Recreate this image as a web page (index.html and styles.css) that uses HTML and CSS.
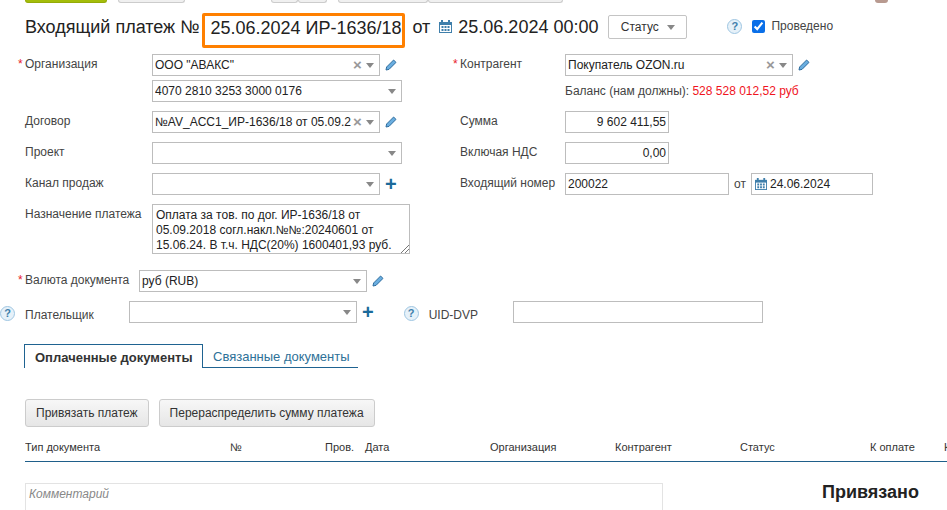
FILE: index.html
```html
<!DOCTYPE html>
<html lang="ru">
<head>
    <meta charset="UTF-8">
    <title>Входящий платеж</title>
    <link rel="stylesheet" href="styles.css">
</head>
<body>
    <svg class="sprite" width="0" height="0">
        <symbol id="i-pencil" viewBox="0 0 12 12">
            <path d="M8.600 1 11 3.400 4 10.400 1 11 1.600 8z" fill="#6aaee0" stroke="#2f6d9e" stroke-width="1"/>
        </symbol>
        <symbol id="i-cal" viewBox="0 0 13 13">
            <path d="M0 2h13v11H0z" fill="#3f7fab"/>
            <path d="M1 5h11v7H1z" fill="#fff"/>
            <path d="M2 0h2v3H2zM9 0h2v3H9z" fill="#3f7fab"/>
            <path d="M2.500 6h2v2h-2zM5.500 6h2v2h-2zM8.500 6h2v2h-2zM2.500 9h2v2h-2zM5.500 9h2v2h-2zM8.500 9h2v2h-2z" fill="#3f7fab"/>
        </symbol>
    </svg>

    <!-- Верхняя панель (обрезана) -->
    <div class="toolbar">
        <span class="tool tool-green"></span>
        <span class="tool tool-a"></span>
        <span class="tool tool-b"></span>
        <span class="tool tool-b2"></span>
        <span class="tool tool-c"></span>
        <span class="tool tool-c2"></span>
        <span class="avatar"></span>
    </div>

    <!-- Заголовок -->
    <div class="title-row">
        <span class="title-name">Входящий платеж №</span>
        <span class="title-number">25.06.2024 ИР-1636/18</span>
        <span class="title-from">от</span>
        <svg class="icon-cal"><use href="#i-cal"/></svg>
        <span class="title-date">25.06.2024 00:00</span>
        <button class="status-btn">Статус <i class="arrow"></i></button>
        <span class="help help-title">?</span>
        <input class="check" type="checkbox" checked>
        <span class="check-label">Проведено</span>
    </div>

    <!-- Форма -->
    <div class="form">
        <div class="col">
            <div class="row row-tight">
                <label class="label req">Организация</label>
                <div class="select w228"><span class="val">ООО "АВАКС"</span><i class="clear">×</i><i class="arrow"></i></div>
                <svg class="icon-pencil"><use href="#i-pencil"/></svg>
            </div>
            <div class="row">
                <label class="label"></label>
                <div class="select w250"><span class="val">4070 2810 3253 3000 0176</span><i class="arrow"></i></div>
            </div>
            <div class="row">
                <label class="label">Договор</label>
                <div class="select w228"><span class="val">№AV_ACC1_ИР-1636/18 от 05.09.2</span><i class="clear">×</i><i class="arrow"></i></div>
                <svg class="icon-pencil"><use href="#i-pencil"/></svg>
            </div>
            <div class="row">
                <label class="label">Проект</label>
                <div class="select w250"><span class="val"></span><i class="arrow"></i></div>
            </div>
            <div class="row">
                <label class="label">Канал продаж</label>
                <div class="select w228"><span class="val"></span><i class="arrow"></i></div>
                <span class="plus">+</span>
            </div>
            <div class="row">
                <label class="label">Назначение платежа</label>
                <div class="textarea">Оплата за тов. по дог. ИР-1636/18 от 05.09.2018 согл.накл.№№:20240601 от 15.06.24. В т.ч. НДС(20%) 1600401,93 руб.
                    <svg class="grip" width="9" height="9" viewBox="0 0 9 9"><path d="M1 9 9 1M5 9 9 5" stroke="#777" fill="none"/></svg>
                </div>
            </div>
        </div>
        <div class="col col-right">
            <div class="row row-tight">
                <label class="label label-r req">Контрагент</label>
                <div class="select w228"><span class="val">Покупатель OZON.ru</span><i class="clear">×</i><i class="arrow"></i></div>
                <svg class="icon-pencil"><use href="#i-pencil"/></svg>
            </div>
            <div class="row balance-row">
                <label class="label label-r"></label>
                <span class="balance">Баланс (нам должны): <b>528 528 012,52 руб</b></span>
            </div>
            <div class="row">
                <label class="label label-r">Сумма</label>
                <div class="input w104 num">9 602 411,55</div>
            </div>
            <div class="row">
                <label class="label label-r">Включая НДС</label>
                <div class="input w104 num">0,00</div>
            </div>
            <div class="row">
                <label class="label label-r">Входящий номер</label>
                <div class="input w164">200022</div>
                <span class="from-small">от</span>
                <div class="input w122 date"><svg class="icon-cal-sm"><use href="#i-cal"/></svg>24.06.2024</div>
            </div>
        </div>
    </div>

    <div class="row currency-row">
        <label class="label label-cur req">Валюта документа</label>
        <div class="select w228"><span class="val">руб (RUB)</span><i class="arrow"></i></div>
        <svg class="icon-pencil"><use href="#i-pencil"/></svg>
    </div>
    <div class="payer-row">
        <span class="help help-payer">?</span>
        <label class="label label-payer">Плательщик</label>
        <div class="select w228"><span class="val"></span><i class="arrow"></i></div>
        <span class="plus">+</span>
        <span class="help help-uid">?</span>
        <label class="label label-uid">UID-DVP</label>
        <div class="input w250"></div>
    </div>

    <!-- Вкладки -->
    <div class="tabs">
        <a class="tab active">Оплаченные документы</a>
        <a class="tab">Связанные документы</a>
    </div>

    <div class="actions">
        <button class="btn">Привязать платеж</button>
        <button class="btn">Перераспределить сумму платежа</button>
    </div>

    <!-- Таблица -->
    <div class="thead">
        <span>Тип документа</span>
        <span>№</span>
        <span>Пров.</span>
        <span>Дата</span>
        <span>Организация</span>
        <span>Контрагент</span>
        <span>Статус</span>
        <span>К оплате</span>
        <span>К</span>
    </div>

    <div class="bottom">
        <div class="comment">Комментарий</div>
        <div class="linked">Привязано</div>
    </div>
</body>
</html>
```

FILE: styles.css
```css
* {
    margin: 0;
    padding: 0;
    box-sizing: border-box;
}

html, body {
    height: 510px;
    overflow: hidden;
}

body {
    background: #fff;
    color: #333;
    font-family: "Liberation Sans", Arial, sans-serif;
    font-size: 12px;
    width: 947px;
}

.sprite {
    position: absolute;
}

/* Верхняя панель */
.toolbar {
    display: flex;
    height: 3px;
    overflow: hidden;
    padding-left: 25px;
}

.tool {
    display: block;
    height: 3px;
    border: 1px solid #ccc;
    border-top: 0;
    border-radius: 0 0 3px 3px;
    background: #f0f0f0;
}

.tool-green {
    width: 82px;
    background: #a4bd0a;
    border-color: #94ab08;
}

.tool-a {
    width: 67px;
    margin-left: 11px;
}

.tool-b {
    width: 27px;
    margin-left: 86px;
}

.tool-b2 {
    width: 29px;
}

.tool-c {
    width: 90px;
    margin-left: 11px;
}

.tool-c2 {
    width: 135px;
}

.avatar {
    width: 13px;
    height: 3px;
    margin-left: 312px;
    background: #b89a90;
    border-radius: 0 0 7px 7px;
}

/* Заголовок */
.title-row {
    display: flex;
    align-items: flex-start;
    height: 36px;
    margin-top: 10px;
    padding-left: 25px;
    font-size: 18px;
    line-height: 28px;
    color: #222;
    white-space: nowrap;
}

.title-number {
    display: block;
    width: 203px;
    height: 35px;
    margin-left: 3px;
    padding-left: 5px;
    line-height: 25px;
    border: 3px solid #ff8000;
    border-radius: 2px;
}

.title-from {
    margin-left: 7px;
}

.icon-cal {
    width: 13px;
    height: 13px;
    margin: 7px 0 0 9px;
}

.title-date {
    margin-left: 6px;
}

.status-btn {
    width: 79px;
    height: 24px;
    margin: 2px 0 0 10px;
    border: 1px solid #c4c4c4;
    border-radius: 2px;
    background: #fff;
    color: #333;
    font: 12px "Liberation Sans", Arial, sans-serif;
}

.status-btn .arrow {
    margin-left: 5px;
}

.help {
    display: inline-block;
    flex: none;
    width: 15px;
    height: 15px;
    border: 1px solid #9fc6e2;
    border-radius: 50%;
    background: #e6f1f9;
    color: #3f7fab;
    font-size: 11px;
    font-weight: bold;
    line-height: 13px;
    text-align: center;
}

.help-title {
    margin: 6px 0 0 40px;
}

.check {
    width: 13px;
    height: 13px;
    margin: 7px 0 0 10px;
    accent-color: #0a6fe8;
}

.check-label {
    margin-left: 6px;
    font-size: 12px;
    line-height: 27px;
    color: #444;
}

/* Форма */
.form {
    display: flex;
    padding-left: 25px;
    margin-top: 5px;
}

.col {
    width: 435px;
}

.row {
    display: flex;
    align-items: flex-start;
    margin-bottom: 9px;
}

.row-tight {
    margin-bottom: 4px;
}

.balance-row {
    height: 22px;
    align-items: center;
}

.label {
    position: relative;
    display: block;
    flex: none;
    width: 127px;
    line-height: 20px;
    color: #444;
}

.label-r {
    width: 105px;
}

.req::before {
    content: "*";
    position: absolute;
    left: -7px;
    top: 0;
    color: #e8202a;
}

.select,
.input,
.textarea {
    flex: none;
    height: 22px;
    border: 1px solid #bdbdbd;
    background: #fff;
    color: #222;
    line-height: 20px;
}

.select {
    display: flex;
    align-items: center;
    padding: 0 5px 0 2px;
}

.val {
    flex: 1;
    min-width: 0;
    overflow: hidden;
    white-space: nowrap;
}

.clear {
    width: 11px;
    color: #999;
    font-size: 15px;
    font-style: normal;
    font-weight: bold;
    text-align: center;
}

.arrow {
    display: inline-block;
    width: 0;
    height: 0;
    margin-left: 3px;
    vertical-align: middle;
    border-top: 5px solid #888;
    border-left: 4.500px solid transparent;
    border-right: 4.500px solid transparent;
}

.w228 { width: 228px; }
.w250 { width: 250px; }
.w104 { width: 104px; }
.w164 { width: 164px; }
.w122 { width: 122px; }

.input {
    padding: 0 2px;
}

.num {
    text-align: right;
}

.date {
    display: flex;
    align-items: center;
}

.icon-cal-sm {
    width: 12px;
    height: 12px;
    margin: 0 3px 0 1px;
}

.from-small {
    width: 22px;
    padding-left: 5px;
    line-height: 22px;
    color: #444;
}

.icon-pencil {
    flex: none;
    width: 12px;
    height: 12px;
    margin: 5px 0 0 5px;
}

.plus {
    margin-left: 5px;
    color: #1b6a9a;
    font-size: 20px;
    font-weight: bold;
    line-height: 22px;
}

.textarea {
    position: relative;
    width: 258px;
    height: 50px;
    padding: 3px 12px 0 3px;
    line-height: 15px;
}

.grip {
    position: absolute;
    right: 0;
    bottom: 0;
}

.balance {
    color: #444;
}

.balance b {
    font-weight: normal;
    color: #f0141e;
}

.currency-row {
    margin: 7px 0 0 25px;
}

.label-cur {
    width: 114px;
}

.payer-row {
    display: flex;
    align-items: flex-start;
    height: 22px;
    margin-top: 9px;
}

.help-payer,
.help-uid {
    margin-top: 5px;
}

.label-payer {
    width: 104px;
    margin-left: 10px;
    padding-top: 4px;
}

.help-uid {
    margin-left: 30px;
}

.label-uid {
    width: 84px;
    margin-left: 10px;
    padding-top: 4px;
}

/* Вкладки */
.tabs {
    display: flex;
    width: 334px;
    height: 24px;
    margin: 21px 0 0 24px;
    border-bottom: 1px solid #1f6391;
    white-space: nowrap;
}

.tab {
    height: 23px;
    padding: 0 10px;
    line-height: 25px;
    font-size: 13px;
    color: #2e7198;
}

.tab.active {
    width: 179px;
    height: 24px;
    background: #fff;
    border: 1px solid #1f6391;
    border-bottom: 0;
    font-weight: bold;
    color: #333;
}

/* Кнопки */
.actions {
    display: flex;
    gap: 10px;
    margin: 31px 0 0 25px;
}

.btn {
    height: 28px;
    padding: 0 10px;
    border: 1px solid #ccc;
    border-radius: 3px;
    background: linear-gradient(#f7f7f7, #e6e6e6);
    color: #333;
    font: 12px "Liberation Sans", Arial, sans-serif;
}

/* Таблица */
.thead {
    display: grid;
    grid-template-columns: 205px 95px 40px 125px 125px 125px 130px 74px 3px;
    width: 922px;
    height: 35px;
    margin-left: 25px;
    padding-top: 14px;
    border-bottom: 1px solid #1f5f8a;
    overflow: hidden;
    font-size: 11px;
    line-height: 13px;
    color: #333;
}

.bottom {
    display: flex;
    margin-left: 25px;
}

.comment {
    width: 638px;
    height: 27px;
    margin-top: 21px;
    padding: 3px;
    border: 1px solid #e3e3e3;
    border-bottom: 0;
    color: #888;
    font-style: italic;
}

.linked {
    margin: 20px 0 0 159px;
    font-size: 18px;
    font-weight: bold;
    color: #222;
}
```
